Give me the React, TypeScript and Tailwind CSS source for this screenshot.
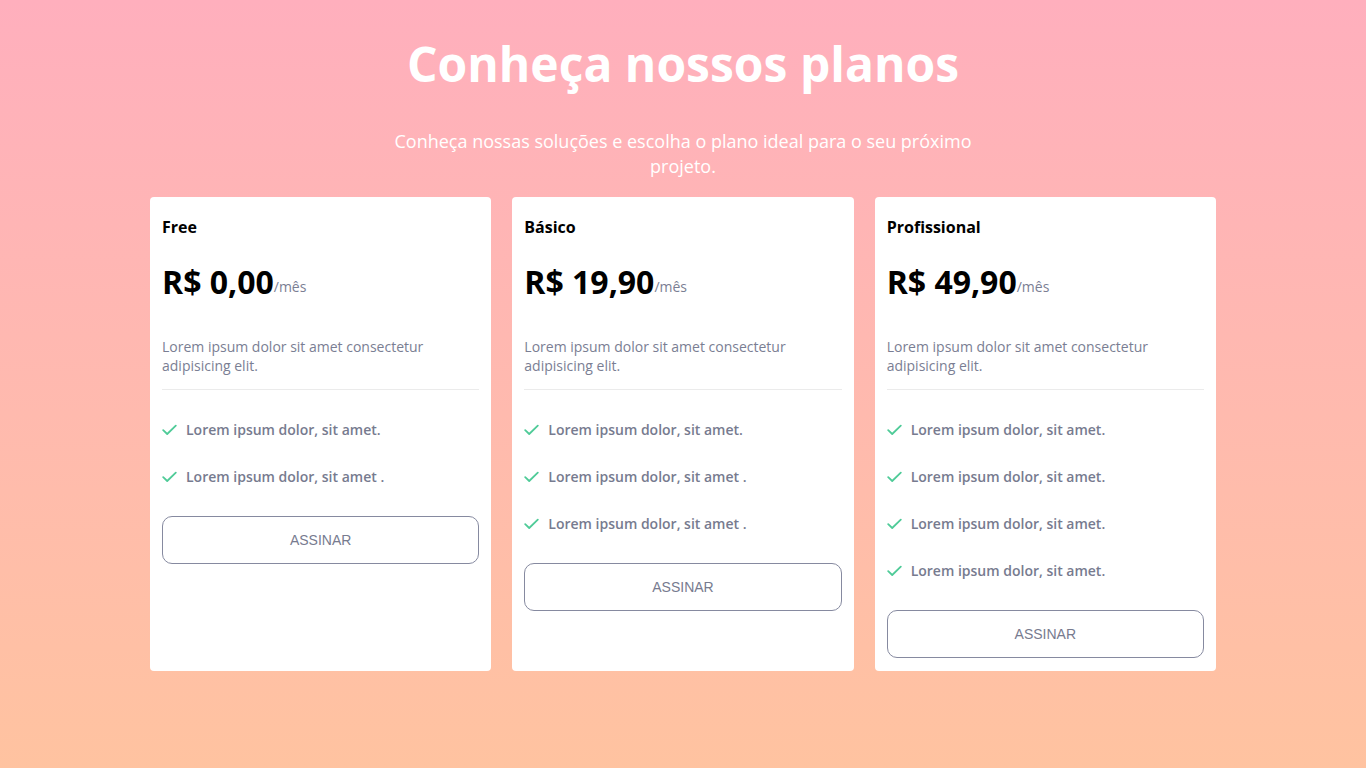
import React from "react";

const plans = [
  {
    name: "Free",
    price: "R$ 0,00",
    features: ["Lorem ipsum dolor, sit amet.", "Lorem ipsum dolor, sit amet ."],
  },
  {
    name: "Básico",
    price: "R$ 19,90",
    features: [
      "Lorem ipsum dolor, sit amet.",
      "Lorem ipsum dolor, sit amet .",
      "Lorem ipsum dolor, sit amet .",
    ],
  },
  {
    name: "Profissional",
    price: "R$ 49,90",
    features: [
      "Lorem ipsum dolor, sit amet.",
      "Lorem ipsum dolor, sit amet.",
      "Lorem ipsum dolor, sit amet.",
      "Lorem ipsum dolor, sit amet.",
    ],
  },
];

function CheckIcon() {
  return (
    <svg width="15" height="12" viewBox="0 0 15 12" fill="none" className="shrink-0">
      <path d="M1.2 6.2 L5.2 10 L13.8 1.6" stroke="#4fcb98" strokeWidth="1.8" strokeLinecap="round" strokeLinejoin="round" />
    </svg>
  );
}

export default function App() {
  return (
    <div
      className="min-h-screen w-full bg-gradient-to-b from-[#ffafbd] to-[#ffc3a0] flex flex-col items-center pt-[28px]"
      style={{ fontFamily: '"Open Sans", sans-serif' }}
    >
      <h1 className="text-[48px] leading-[72px] font-bold text-white">Conheça nossos planos</h1>
      <p className="mt-[29px] w-[600px] text-center text-[18px] leading-[25px] text-white">
        Conheça nossas soluções e escolha o plano ideal para o seu próximo projeto.
      </p>
      <div className="mt-[18px] grid grid-cols-3 w-[1066px] gap-[21px] items-stretch">
        {plans.map((p) => (
          <div key={p.name} className="bg-white rounded-[4px] px-[12px] pt-[18px] pb-[13px] flex flex-col">
            <h2 className="text-[16px] leading-[24px] font-bold text-black">{p.name}</h2>
            <div className="mt-[19px] flex items-baseline h-[48px]">
              <span className="text-[32px] leading-[48px] font-bold text-black">{p.price}</span>
              <span className="relative -top-[2px] text-[14px] text-[#7a7e93]">/mês</span>
            </div>
            <p className="mt-[31px] text-[14px] leading-[19px] text-[#7a7e93]">
              Lorem ipsum dolor sit amet consectetur adipisicing elit.
            </p>
            <div className="mt-[14px] h-px bg-[#ebebeb]" />
            <ul className="pt-[16px] pb-[16px]">
              {p.features.map((f, i) => (
                <li key={i} className="h-[47px] flex items-center gap-[9px]">
                  <CheckIcon />
                  <span className="text-[14px] font-semibold text-[#777b8f]">{f}</span>
                </li>
              ))}
            </ul>
            <button
              className="h-[48px] w-full rounded-[10px] border border-[#868aa0] bg-white text-[14px] text-[#777b8f]"
              style={{ fontFamily: '"Liberation Sans", Arial, sans-serif' }}
            >
              ASSINAR
            </button>
          </div>
        ))}
      </div>
    </div>
  );
}
